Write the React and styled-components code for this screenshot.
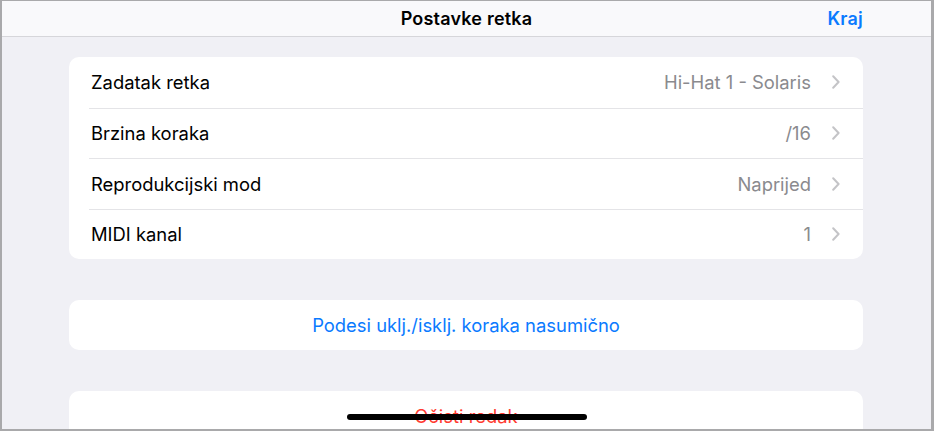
import React from "react";
import styled, { createGlobalStyle } from "styled-components";

const Global = createGlobalStyle`
  html, body { margin: 0; padding: 0; background: #ffffff; }
  * { box-sizing: border-box; }
`;

const Frame = styled.div`
  position: relative;
  width: 934px;
  height: 431px;
  overflow: hidden;
  border-style: solid;
  border-color: #a9a9ab;
  border-width: 1px 3px 2px 2px;
  background: #f0f0f5;
  font-family: Inter, "Liberation Sans", Arial, sans-serif;
  display: flex;
  flex-direction: column;
`;

const NavBar = styled.header`
  height: 36px;
  flex: none;
  background: #f9f9fb;
  border-bottom: 1.5px solid #d6d6da;
  display: grid;
  grid-template-columns: 1fr auto 1fr;
  align-items: center;
  padding: 0 68px;
`;

const Title = styled.h1`
  grid-column: 2;
  margin: 0;
  font-size: 18px;
  font-weight: 600;
  color: #000;
  letter-spacing: 0.2px;
`;

const NavButton = styled.button`
  grid-column: 3;
  justify-self: end;
  border: 0;
  background: none;
  padding: 0;
  font: inherit;
  font-size: 18px;
  font-weight: 600;
  letter-spacing: 0.2px;
  color: #0a7aff;
`;

const Content = styled.main`
  display: flex;
  flex-direction: column;
  gap: 41px;
  padding: 20px 68px 0 67px;
`;

const Card = styled.section`
  background: #ffffff;
  border-radius: 10px;
  overflow: hidden;
  flex: none;
`;

const Row = styled.div`
  height: 50.5px;
  display: flex;
  align-items: center;
  margin-left: 20px;
  padding: 0 23px 0 2px;
  border-top: ${(p) => (p.$first ? "none" : "1px solid #e4e4e7")};
  font-size: 18.4px;
  color: #000;
`;

const Label = styled.span`
  flex: 1;
`;

const Value = styled.span`
  color: #8a8a8e;
  margin-right: 21px;
`;

const Chevron = () => (
  <svg width="8" height="14" viewBox="0 0 8 14">
    <path d="M1.2 1.2 L6.6 7 L1.2 12.8" fill="none" stroke="#c4c4c7" strokeWidth="2" strokeLinecap="round" strokeLinejoin="round" />
  </svg>
);

const ActionRow = styled.div`
  height: 50px;
  display: flex;
  align-items: center;
  justify-content: center;
  font-size: 18.4px;
  color: ${(p) => (p.$danger ? "#ff3b30" : "#0a7aff")};
`;

const HomeIndicator = styled.div`
  position: absolute;
  left: 345px;
  top: 413px;
  width: 240px;
  height: 6px;
  border-radius: 3px;
  background: #000;
`;

const rows = [
  ["Zadatak retka", "Hi-Hat 1 - Solaris"],
  ["Brzina koraka", "/16"],
  ["Reprodukcijski mod", "Naprijed"],
  ["MIDI kanal", "1"],
];

export default function App() {
  return (
    <>
      <Global />
      <Frame>
        <NavBar>
          <Title>Postavke retka</Title>
          <NavButton>Kraj</NavButton>
        </NavBar>
        <Content>
          <Card>
            {rows.map(([l, v], i) => (
              <Row key={l} $first={i === 0}>
                <Label>{l}</Label>
                <Value>{v}</Value>
                <Chevron />
              </Row>
            ))}
          </Card>
          <Card>
            <ActionRow>Podesi uklj./isklj. koraka nasumično</ActionRow>
          </Card>
          <Card>
            <ActionRow $danger>Očisti redak</ActionRow>
          </Card>
        </Content>
        <HomeIndicator />
      </Frame>
    </>
  );
}
